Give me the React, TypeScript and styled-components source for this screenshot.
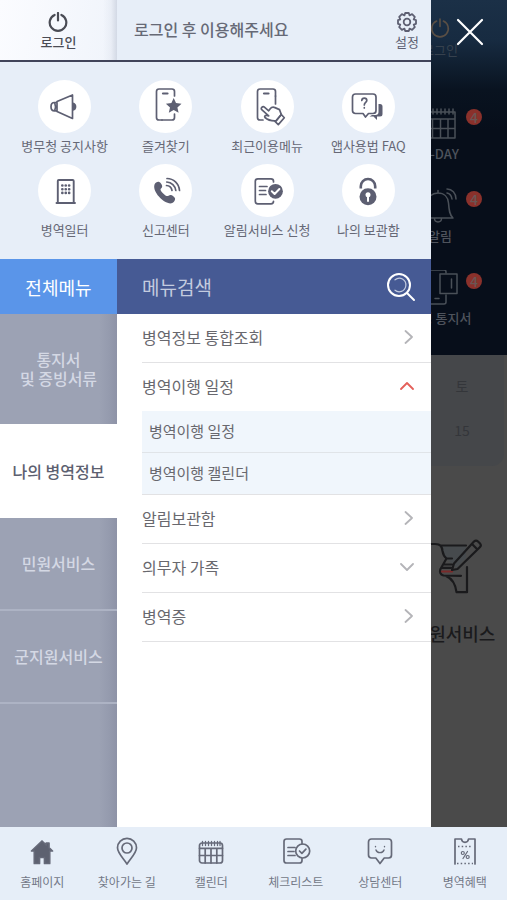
import React from "react";
import styled, { createGlobalStyle, css } from "styled-components";

const ink = "#5d5f72";

const GlobalStyle = createGlobalStyle`
  *, *::before, *::after { box-sizing: border-box; }
  body {
    margin: 0;
    font-family: "Noto Sans CJK KR", "Noto Sans", sans-serif;
    color: ${ink};
  }
  button, input { font: inherit; color: inherit; }
  button { border: 0; padding: 0; background: none; cursor: pointer; }
  a { color: inherit; text-decoration: none; }
  ul { list-style: none; margin: 0; padding: 0; }
  svg { display: block; flex: none; }
`;

/* ---------- shell ---------- */

const Shell = styled.div`
  display: flex;
  flex-direction: column;
  min-height: 100vh;
`;

const Stage = styled.div`
  flex: 1;
  display: grid;
  grid-template: 1fr / minmax(0, 1fr);
  overflow: hidden;
  background: #4a4a4a;

  & > * { grid-area: 1 / 1; }
`;

const Overlay = styled.div`
  display: flex;
  align-items: stretch;
  z-index: 1;
`;

const Drawer = styled.aside`
  flex: 0 0 85%;
  display: flex;
  flex-direction: column;
  background: #fff;
`;

const CloseSide = styled.div`
  flex: 1;
  display: flex;
  justify-content: center;
  align-items: flex-start;
  padding-top: 16px;
`;

const split = css`
  display: grid;
  grid-template-columns: 117fr 314fr;
`;

/* ---------- drawer header ---------- */

const DrawerHeader = styled.header`
  ${split}
  height: 62px;
  background: #e7eef8;
  border-bottom: 2px solid #41445a;
`;

const IconAction = styled.button<{ $strong?: boolean }>`
  display: flex;
  flex-direction: column;
  align-items: center;
  padding-top: 12px;
  font-size: 13px;
  line-height: 20px;
  font-weight: ${(p) => (p.$strong ? 500 : 400)};
  color: ${(p) => (p.$strong ? "#4a4c55" : ink)};
`;

const LoginCell = styled.div`
  display: flex;
  justify-content: center;
  align-items: flex-start;
  background:
    linear-gradient(to left, #d3d9e5 0, rgba(225, 230, 240, 0.5) 6px, rgba(240, 243, 250, 0) 14px),
    linear-gradient(100deg, #fbfcff, #f0f4fb);
`;

const Greeting = styled.div`
  display: flex;
  justify-content: space-between;
  padding: 0 12px 0 17px;
`;

const GreetingText = styled.p`
  margin: 0;
  font-size: 16px;
  font-weight: 500;
  line-height: 59px;
  color: #666976;
`;

/* ---------- quick links ---------- */

const QuickGrid = styled.nav`
  display: grid;
  grid-template-columns: repeat(4, 1fr);
  row-gap: 8px;
  padding: 18px 12px 19px 14px;
  background: #e7eef8;
`;

const QuickLink = styled.a`
  display: flex;
  flex-direction: column;
  align-items: center;
  gap: 3px;
  font-size: 13px;
  line-height: 20px;
  white-space: nowrap;
  color: #666876;
`;

const Disc = styled.span`
  display: grid;
  place-items: center;
  width: 53px;
  height: 53px;
  border-radius: 50%;
  background: #fff;
`;

/* ---------- search bar ---------- */

const SearchBar = styled.div`
  ${split}
  height: 55px;
`;

const AllMenu = styled.button`
  background: #5a95e9;
  color: #fff;
  font-size: 18px;
  line-height: 24px;
`;

const SearchForm = styled.form`
  display: flex;
  align-items: center;
  padding: 0 15px 0 25px;
  background: #465a94;
`;

const SearchInput = styled.input`
  flex: 1;
  min-width: 0;
  border: 0;
  padding: 0;
  outline: 0;
  background: none;
  color: #fff;
  font-size: 19px;
  line-height: 28px;

  &::placeholder { color: #c3cbdf; opacity: 1; }
`;

/* ---------- menu body ---------- */

const MenuBody = styled.div`
  ${split}
  flex: 1;
`;

const TabColumn = styled.div`
  display: flex;
  flex-direction: column;
  background: linear-gradient(to left, #8e93a7 0, #959bae 8px, #9ca2b4 18px);
`;

const Tab = styled.button<{ $active?: boolean; $tall?: boolean; $line?: boolean }>`
  height: ${(p) => (p.$tall ? 110 : p.$active ? 94 : 93)}px;
  font-size: 16px;
  font-weight: 500;
  line-height: 19px;
  white-space: pre-line;
  color: ${(p) => (p.$active ? "#5c6070" : "#d4d8e4")};
  background: ${(p) => (p.$active ? "#fff" : "none")};
  border-bottom: ${(p) => (p.$line ? "2px solid #adb3c4" : "0")};
`;

const MenuList = styled.ul`
  padding-left: 25px;
`;

const MenuItem = styled.li`
  border-bottom: 1px solid #e2e2e4;
`;

const MenuRow = styled.button`
  display: flex;
  align-items: center;
  justify-content: space-between;
  width: 100%;
  height: 48px;
  padding: 0 17px 2px 0;
  font-size: 16px;
  line-height: 24px;
  color: #68686e;
`;

const SubList = styled.ul`
  background: #f0f6fc;
`;

const SubItem = styled.li`
  & + & { border-top: 1px solid #e0e4e8; }
`;

const SubLink = styled.a`
  display: block;
  padding: 0 0 2px 7px;
  font-size: 15px;
  line-height: 39px;
  color: #68686e;
`;

/* ---------- bottom bar ---------- */

const BottomBar = styled.nav`
  display: grid;
  grid-template-columns: repeat(6, 1fr);
  background: #e6eef8;
`;

const BottomLink = styled.a`
  display: flex;
  flex-direction: column;
  align-items: center;
  gap: 4px;
  padding: 9px 0 8px;
  font-size: 12px;
  line-height: 20px;
  white-space: nowrap;
  color: #737887;
`;

/* ---------- dimmed home page ---------- */

const Home = styled.div`
  display: flex;
  flex-direction: column;
`;

const HomeTop = styled.section`
  display: flex;
  flex-direction: column;
  align-items: flex-end;
  height: 355px;
  padding-top: 18px;
  background: linear-gradient(#1b3047 0, #172b41 40px, #091320 90px, #070e1a 130px);
`;

const HomeItem = styled.div<{ $user?: boolean }>`
  display: flex;
  flex-direction: column;
  align-items: center;
  gap: 2px;
  width: 134px;
  margin-bottom: ${(p) => (p.$user ? 46 : 24)}px;
  font-size: 13px;
  font-weight: ${(p) => (p.$user ? 400 : 500)};
  line-height: 20px;
  color: ${(p) => (p.$user ? "#36414e" : "#4e535c")};
`;

const BadgeAnchor = styled.span`
  position: relative;
`;

const Badge = styled.span`
  position: absolute;
  top: 3px;
  left: 44px;
  width: 16px;
  height: 16px;
  border-radius: 50%;
  background: #8a312b;
  color: #6b5654;
  font-size: 14px;
  font-weight: 500;
  line-height: 16px;
  text-align: center;
`;

const HomeWeek = styled.section`
  display: flex;
  flex-direction: column;
  align-items: flex-end;
  gap: 20px;
  height: 111px;
  margin-right: 3px;
  padding-top: 19px;
  border-bottom-right-radius: 12px;
  background: #45474a;
  color: #34363a;
  font-size: 14px;
  line-height: 24px;
`;

const WeekCell = styled.span`
  width: 84px;
  text-align: center;
`;

const HomeService = styled.section`
  align-self: flex-end;
  display: flex;
  flex-direction: column;
  align-items: center;
  gap: 27px;
  width: 106px;
  padding-top: 72px;
  font-size: 18px;
  font-weight: 500;
  line-height: 24px;
  color: #1a1a1c;
`;

/* ---------- icons ---------- */

type IconProps = { size: number; color?: string; width?: number; children: React.ReactNode };

const Icon = ({ size, color = ink, width = 1.7, children }: IconProps) => (
  <svg
    width={size}
    height={size}
    viewBox={`0 0 ${size} ${size}`}
    fill="none"
    stroke={color}
    strokeWidth={width}
    strokeLinecap="round"
    strokeLinejoin="round"
    aria-hidden="true"
  >
    {children}
  </svg>
);

const Power = ({ color, width }: { color: string; width: number }) => (
  <Icon size={20} color={color} width={width}>
    <path d="M6.600 3A8.300 8.300 0 1 0 13.400 3M10 1v7.500" />
  </Icon>
);

const Gear = () => (
  <Icon size={20} width={1.8}>
    <path d="M8.200 1h3.600l.7 2.300 2.600-1.100 2.700 2.700-1.100 2.600 2.300.7v3.600l-2.300.7 1.100 2.600-2.700 2.700-2.600-1.100-.7 2.300H8.200l-.7-2.300-2.600 1.100-2.700-2.700 1.100-2.600L1 11.800V8.200l2.300-.7-1.100-2.600 2.700-2.700 2.600 1.100z" />
    <circle cx="10" cy="10" r="3.3" />
  </Icon>
);

const PhoneFrame = () => (
  <>
    <path d="M28.500 9V4.500q0-2.500-2.500-2.500H13q-2.500 0-2.500 2.500v26q0 2.500 2.500 2.500h3" />
    <path d="M17 6.500h4.500" strokeWidth="2.2" />
  </>
);

const quickLinks = [
  {
    label: "병무청 공지사항",
    icon: (
      <>
        <path d="M12 14.500 27.500 8v23.500L12 24.500zM12 15.500H9.500C7 15.500 6 17.500 6 19.700s1 4.100 3.500 4.100H12M9.700 15.700c1 2.500 1 5.500 0 8" />
        <path d="M28 15.500c4.500.3 4.500 8 0 8.300z" fill={ink} stroke="none" />
      </>
    ),
  },
  {
    label: "즐겨찾기",
    icon: (
      <>
        <PhoneFrame />
        <path d="M16 33h10q2.500 0 2.500-2.500V27" />
        <path
          d="m27.700 11 2.300 5.100 5.500.6-4.100 3.700 1.200 5.400-4.900-2.800-4.900 2.800 1.200-5.400-4.100-3.700 5.500-.6z"
          fill={ink}
          stroke="none"
        />
      </>
    ),
  },
  {
    label: "최근이용메뉴",
    icon: (
      <>
        <PhoneFrame />
        <path d="M28.500 9v8" />
        <path d="M14.800 20.300c.9-.9 2-.8 2.900 0l4 3.500 1.500-2c1.300-1.700 2.900-2 4.800-1.200l4.500 2 1.800 4.900-5 6.300c-4 .3-8-.3-11.300-3.300-.9-1.200.1-2.300 1.500-2l2.200.4-6.700-6c-.9-.8-1-1.800-.2-2.600z" />
        <path d="m34.300 27.500 3 3.300-6 6.800-3.300-3.200M34.300 27.500l-5.300 6.300" />
      </>
    ),
  },
  {
    label: "앱사용법 FAQ",
    icon: (
      <>
        <path d="M7.500 7h17.500q3 0 3 3v13.500q0 3-3 3h-4.500L17.500 30 15 26.500H7.500q-3 0-3-3V10q0-3 3-3z" />
        <path d="M30.500 17h1.500q2.500 0 2.500 2.500V27q0 2.500-2.500 2.500h-3V33l-3.500-3.500h-4l2.500-1.500h3.500q3 0 3-3z" fill={ink} stroke="none" />
        <path d="M13.800 13.500c.2-3.200 5-3.100 5 0 0 2-2.500 2-2.500 4.500M16.300 20.700v.2" />
      </>
    ),
  },
  {
    label: "병역일터",
    icon: (
      <>
        <path d="M12.800 32V10q0-1 1-1h13.900q1 0 1 1v22M11.500 32h18.500" strokeWidth="1.900" />
        <path d="M17.300 14.500h.1M20.700 14.500h.1M24.100 14.500h.1M17.300 18.200h.1M20.700 18.200h.1M24.100 18.200h.1M17.300 21.900h.1M20.700 21.900h.1M24.100 21.900h.1" strokeWidth="2.600" />
      </>
    ),
  },
  {
    label: "신고센터",
    icon: (
      <>
        <path
          d="M8.500 13.500c1-2 3-3.200 4.800-2.500 1.500.8 3 2.800 2.900 4.400-.1 1.500-1.700 2-1.700 3 .2 2.200 4.800 6.500 7 6.700 1 0 1.700-1.300 3.200-1.200 1.600.1 3.800 1.800 4.300 3.400.5 2-1.200 4.500-3.500 5C18.500 33.500 6 21 8.500 13.500z"
          fill={ink}
          stroke="none"
        />
        <path d="M21 7.500c6.500 0 12 5 12.500 12M20.800 11c4.700.2 8.500 4 9 8.500M20.500 14.500c3 .2 5 2.200 5.500 5" />
      </>
    ),
  },
  {
    label: "알림서비스 신청",
    icon: (
      <>
        <path d="M26.500 11v-.7q0-2.500-2.500-2.500H10.800q-2.500 0-2.500 2.500v20q0 2.500 2.500 2.500H24q2.500 0 2.500-2.500" />
        <path d="M12.500 15.500h7.500M12.500 19.500h6M12.500 23.500h6.500" />
        <circle cx="28.500" cy="20.300" r="7.400" fill={ink} stroke="none" />
        <path d="m24.800 20.300 2.800 2.700 4.800-5" stroke="#fff" strokeWidth="2" />
      </>
    ),
  },
  {
    label: "나의 보관함",
    icon: (
      <>
        <path d="M12.800 17.500v-2.300a7.200 7.200 0 0 1 14.400 0v2.300" strokeWidth="2.600" strokeLinecap="butt" />
        <circle cx="20" cy="25.700" r="8.500" fill={ink} stroke="none" />
        <circle cx="20" cy="23.700" r="2.500" fill="#fff" stroke="none" />
        <path d="M20 24.500v5.500" stroke="#fff" strokeWidth="2" />
      </>
    ),
  },
];

const bottomLinks = [
  {
    label: "홈페이지",
    icon: <path d="M16 5 5.500 15h2.800v12.500h5.200v-6h5v6h5.200V15h2.800L23 11.700V7h-2.800v2z" fill="#5d6170" />,
  },
  {
    label: "찾아가는 길",
    icon: (
      <>
        <path d="M16 28C12.500 22.500 6.500 17 6.500 11.800a9.500 9.500 0 0 1 19 0C25.500 17 19.500 22.500 16 28z" />
        <circle cx="16" cy="12" r="5" />
      </>
    ),
  },
  {
    label: "캘린더",
    icon: (
      <>
        <rect x="4.500" y="7" width="23" height="20" rx="2.500" />
        <path d="M4.500 12.300h23M4.500 19.500h23M10.200 12.500V27M16 12.500V27M21.800 12.500V27" />
        <path d="M7.500 5.500v4M10.500 5.500v4M13.500 5.500v4M16.500 5.500v4M19.500 5.500v4M22.500 5.500v4M25 5.500v4" strokeWidth="1.300" />
      </>
    ),
  },
  {
    label: "체크리스트",
    icon: (
      <>
        <path d="M22 8V5.500q0-2.500-2.500-2.500H6.500Q4 3 4 5.500v19Q4 27 6.500 27h13q2.500 0 2.500-2.500v-2" />
        <path d="M8 11.500h7M8 15.500h6M8 19.500h7" />
        <circle cx="22.700" cy="15" r="7" />
        <path d="m19.500 15 2.400 2.400 4-4.200" />
      </>
    ),
  },
  {
    label: "상담센터",
    icon: (
      <>
        <path d="M7.500 3h17q3 0 3 3v13q0 3-3 3h-4.300L16 27.500 11.800 22H7.500q-3 0-3-3V6q0-3 3-3z" />
        <path d="M12 14c1 3.500 7 3.500 8 0M11.500 10.500v.3M20.500 10.500v.3" strokeWidth="1.400" />
      </>
    ),
  },
  {
    label: "병역혜택",
    icon: (
      <>
        <path d="M6 28V3h6.500c.5 4.500 6.500 4.500 7 0H26v25" />
        <path d="M9 10.500h14M8 27.500h16" strokeDasharray="1.500 2.200" strokeLinecap="butt" />
        <path d="m18.500 15.500-4.500 7" strokeWidth="1.200" />
        <circle cx="13.800" cy="17" r="1.500" strokeWidth="1.200" />
        <circle cx="18.700" cy="21" r="1.500" strokeWidth="1.200" />
      </>
    ),
  },
];

const homeItems = [
  {
    label: "D-DAY",
    icon: (
      <>
        <path d="M3 6h30v26H3zM3 13h30M3 22.500h30M10.500 13v19M18.500 13v19M26 13v19" />
        <path d="M7 3v5M11 3v5M15 3v5M19 3v5M23 3v5M27 3v5M31 3v5" />
      </>
    ),
  },
  {
    label: "알림",
    icon: (
      <>
        <path d="M1 30c3-3 3-8 3.500-15C5.500 9 10 5 16 5s10 4 10.500 10c.5 7 1 12 4.500 15zM12.500 30.500c0 4.500 7 4.500 7 0M16 4.500V2.500" />
        <path d="M25 1c5 0 9 4 9 10M25 5c3 .5 4.500 3 5 6" />
      </>
    ),
  },
  {
    label: "입영 통지서",
    icon: (
      <>
        <path d="M24 3V2q0-2-2-2H8Q6 0 6 2v30q0 2 2 2h14q2 0 2-2v-7M13 28.500h4" />
        <path d="M18 4h17v19.500H18zM29.500 9v9" />
      </>
    ),
  },
];

const Chevron = ({ dir }: { dir: "right" | "up" | "down" }) => (
  <Icon size={14} color={dir === "up" ? "#e4605a" : "#b4b4b8"} width={1.8}>
    {dir === "right" && <path d="m5.500 1 6.500 6-6.500 6" />}
    {dir === "up" && <path d="m1 10 6-6 6 6" />}
    {dir === "down" && <path d="m1 4 6 6 6-6" />}
  </Icon>
);

/* ---------- data ---------- */

const tabs = [
  { label: "통지서\n및 증빙서류", tall: true },
  { label: "나의 병역정보", active: true },
  { label: "민원서비스", line: true },
  { label: "군지원서비스", line: true },
];

const menu: { label: string; dir: "right" | "up" | "down"; children?: string[] }[] = [
  { label: "병역정보 통합조회", dir: "right" },
  { label: "병역이행 일정", dir: "up", children: ["병역이행 일정", "병역이행 캘린더"] },
  { label: "알림보관함", dir: "right" },
  { label: "의무자 가족", dir: "down" },
  { label: "병역증", dir: "right" },
];

export default function App() {
  return (
    <Shell>
      <GlobalStyle />
      <Stage>
        <Home aria-hidden="true">
          <HomeTop>
            <HomeItem $user>
              <Power color="#5a4f45" width={1.6} />
              로그인
            </HomeItem>
            {homeItems.map((item) => (
              <HomeItem key={item.label}>
                <BadgeAnchor>
                  <Icon size={36} color="#4a5058" width={1.5}>{item.icon}</Icon>
                  <Badge>4</Badge>
                </BadgeAnchor>
                {item.label}
              </HomeItem>
            ))}
          </HomeTop>
          <HomeWeek>
            <WeekCell>토</WeekCell>
            <WeekCell>15</WeekCell>
          </HomeWeek>
          <HomeService>
            <Icon size={56} color="#1a1a1c" width={2.2}>
              <path d="M14 8h26v12L30 30l-9-9-5-8z" fill="#464a4d" stroke="none" />
              <path d="M0 6h9c6 0 7 3 7.500 7 .5 3 1.500 5.500 4 7.500H26M14 7.500h26M20.500 20.500 14.500 31c-1.200 3-.2 5.500 3 6.500l17.500.3M18 26.500h8M16 29.800h9M20 38c6 2.500 9.500 8 10.500 16.200h10.500V29" />
              <path d="M16 33.500h10" stroke="#7a2a2a" />
              <path d="M28 25.500 48 3.500q2-2 4 0l1.800 1.800q2 2 0 4L31.500 31l-5.500 1zM46 6l5.500 5.500" />
            </Icon>
            민원서비스
          </HomeService>
        </Home>

        <Overlay>
          <Drawer>
            <DrawerHeader>
              <LoginCell>
                <IconAction $strong>
                  <Power color="#4a4c55" width={2.2} />
                  로그인
                </IconAction>
              </LoginCell>
              <Greeting>
                <GreetingText>로그인 후 이용해주세요</GreetingText>
                <IconAction>
                  <Gear />
                  설정
                </IconAction>
              </Greeting>
            </DrawerHeader>

            <QuickGrid aria-label="바로가기">
              {quickLinks.map((q) => (
                <QuickLink key={q.label} href="#">
                  <Disc>
                    <Icon size={40}>{q.icon}</Icon>
                  </Disc>
                  {q.label}
                </QuickLink>
              ))}
            </QuickGrid>

            <SearchBar>
              <AllMenu>전체메뉴</AllMenu>
              <SearchForm onSubmit={(e) => e.preventDefault()}>
                <SearchInput type="text" aria-label="메뉴검색" placeholder="메뉴검색" />
                <button type="submit" aria-label="검색">
                  <Icon size={30} color="#fff" width={2}>
                    <circle cx="13" cy="13" r="11" />
                    <path d="m21 21 7 7" />
                    <path d="M9 7.800c5-4 11.500 0 10.800 6.200-1 5.500-7 7.500-10.800 4.200" strokeWidth="1.200" stroke="#c3cbdf" />
                  </Icon>
                </button>
              </SearchForm>
            </SearchBar>

            <MenuBody>
              <TabColumn>
                {tabs.map((t) => (
                  <Tab key={t.label} $tall={t.tall} $active={t.active} $line={t.line}>
                    {t.label}
                  </Tab>
                ))}
              </TabColumn>
              <MenuList>
                {menu.map((m) => (
                  <MenuItem key={m.label}>
                    <MenuRow aria-expanded={m.dir === "right" ? undefined : m.dir === "up"}>
                      {m.label}
                      <Chevron dir={m.dir} />
                    </MenuRow>
                    {m.children && (
                      <SubList>
                        {m.children.map((c) => (
                          <SubItem key={c}>
                            <SubLink href="#">{c}</SubLink>
                          </SubItem>
                        ))}
                      </SubList>
                    )}
                  </MenuItem>
                ))}
              </MenuList>
            </MenuBody>
          </Drawer>

          <CloseSide>
            <button aria-label="닫기">
              <Icon size={32} color="#fff" width={2.2}>
                <path d="M5 4l24 24M29 4 5 28" />
              </Icon>
            </button>
          </CloseSide>
        </Overlay>
      </Stage>

      <BottomBar aria-label="하단 메뉴">
        {bottomLinks.map((b) => (
          <BottomLink key={b.label} href="#">
            <Icon size={32} color="#666a79">{b.icon}</Icon>
            {b.label}
          </BottomLink>
        ))}
      </BottomBar>
    </Shell>
  );
}
